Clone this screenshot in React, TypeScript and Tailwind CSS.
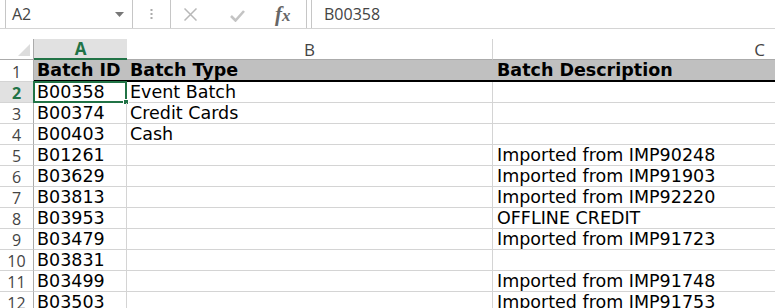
import type { FC } from 'react';

// Sheet data, one entry per row: [id, type, description]
const rows: [string, string, string][] = [
  ['B00358', 'Event Batch', ''],
  ['B00374', 'Credit Cards', ''],
  ['B00403', 'Cash', ''],
  ['B01261', '', 'Imported from IMP90248'],
  ['B03629', '', 'Imported from IMP91903'],
  ['B03813', '', 'Imported from IMP92220'],
  ['B03953', '', 'OFFLINE CREDIT'],
  ['B03479', '', 'Imported from IMP91723'],
  ['B03831', '', ''],
  ['B03499', '', 'Imported from IMP91748'],
  ['B03503', '', 'Imported from IMP91753'],
];

const cellFont = { fontFamily: '"DejaVu Sans", Verdana, sans-serif' };
const uiFont = { fontFamily: '"Open Sans", "Noto Sans", sans-serif' };

const FormulaBar: FC = () => (
  <div className="flex h-[29px] border-b border-[#d4d4d4] text-[16px] text-[#444]" style={uiFont}>
    <div className="ml-[5px] flex w-[128px] items-center justify-between border-x border-[#c6c6c6] pl-[6px] pr-[8px]">
      <span>A2</span>
      <svg width="9" height="5" viewBox="0 0 9 5"><path d="M0 0h9L4.5 5z" fill="#777" /></svg>
    </div>
    <div className="flex w-[37px] items-center justify-center">
      <svg width="3" height="10" viewBox="0 0 3 10" fill="#aaa">
        <rect x="0.5" y="0" width="2" height="2" />
        <rect x="0.5" y="4" width="2" height="2" />
        <rect x="0.5" y="8" width="2" height="2" />
      </svg>
    </div>
    <div className="flex w-[137px] items-center border-x border-[#c6c6c6]">
      <svg className="ml-[13px]" width="13" height="13" viewBox="0 0 13 13">
        <path d="M0.5 0.5l12 12M12.5 0.5l-12 12" stroke="#b8b8b8" strokeWidth="1.5" />
      </svg>
      <svg className="ml-[33px] mt-[4px]" width="15" height="12" viewBox="0 0 15 12">
        <path d="M1 6l4.5 4.5L14 1" stroke="#c4c4c4" strokeWidth="2.6" fill="none" />
      </svg>
      <span className="ml-[30px] text-[21px] font-bold italic leading-none text-[#666]" style={{ fontFamily: '"Liberation Serif", serif' }}>
        f<span className="text-[17px]">x</span>
      </span>
    </div>
    <div className="ml-[4px] flex flex-1 items-center border-l border-[#c6c6c6] pl-[12px]">B00358</div>
  </div>
);

const App: FC = () => {
  return (
    <div className="h-[308px] w-[775px] overflow-hidden bg-white">
      <FormulaBar />
      <div className="mt-[10px] grid grid-cols-[34px_93px_366px_1fr] text-[17.5px] leading-none text-black" style={cellFont}>
        {/* column headers */}
        <div className="relative h-[21px] border-r border-b border-[#ababab]">
          <svg className="absolute right-[3px] bottom-[3px]" width="12" height="12" viewBox="0 0 12 12">
            <path d="M12 0v12H0z" fill="#dcdcdc" />
          </svg>
        </div>
        <div className="flex h-[21px] items-center justify-center border-b-2 border-[#217346] bg-[#e1e1e1] text-[17px] font-bold text-[#217346]" style={uiFont}>A</div>
        <div className="flex h-[21px] items-center justify-center border-r border-b border-r-[#d4d4d4] border-b-[#ababab] text-[17px] text-[#444]" style={uiFont}>B</div>
        <div className="flex h-[21px] items-center justify-end border-b border-[#ababab] pr-[10px] text-[17px] text-[#444]" style={uiFont}>C</div>

        {/* header row */}
        <div className="flex h-[22px] items-center justify-center border-r border-b border-r-[#ababab] border-b-[#d4d4d4] pt-[2px] text-[16px] text-[#444]" style={uiFont}>1</div>
        <div className="flex h-[22px] items-center border-b-2 border-black bg-[#c0c0c0] pl-[3px] pt-[2px] font-bold">Batch ID</div>
        <div className="flex h-[22px] items-center border-b-2 border-black bg-[#c0c0c0] pl-[3px] pt-[2px] font-bold">Batch Type</div>
        <div className="flex h-[22px] items-center border-b-2 border-black bg-[#c0c0c0] pl-[4px] pt-[2px] font-bold">Batch Description</div>

        {rows.map(([id, type, desc], i) => {
          const n = i + 2;
          const sel = n === 2;
          return [
            <div
              key={`h${n}`}
              className={
                sel
                  ? 'flex h-[21px] items-center justify-center border-r border-b border-r-[#ababab] border-b-[#d4d4d4] bg-[#e1e1e1] pt-[2px] text-[16px] font-bold text-[#217346]'
                  : 'flex h-[21px] items-center justify-center border-r border-b border-r-[#ababab] border-b-[#d4d4d4] pt-[2px] text-[16px] text-[#444]'
              }
              style={uiFont}
            >
              {n}
            </div>,
            <div key={`a${n}`} className="relative flex h-[21px] items-center border-r border-b border-[#d4d4d4] pl-[3px] pt-[2px]">
              {sel && (
                <>
                  <div className="absolute -top-[1px] -left-[1px] -right-[1px] -bottom-[1px] border-2 border-[#217346]" />
                  <div className="absolute -right-[3px] -bottom-[3px] h-[6px] w-[6px] border border-white bg-[#217346]" />
                </>
              )}
              {id}
            </div>,
            <div key={`b${n}`} className="flex h-[21px] items-center border-r border-b border-[#d4d4d4] pl-[3px] pt-[2px]">{type}</div>,
            <div key={`c${n}`} className="flex h-[21px] items-center border-b border-[#d4d4d4] pl-[4px] pt-[2px]">{desc}</div>,
          ];
        })}
      </div>
    </div>
  );
};

export default App;
